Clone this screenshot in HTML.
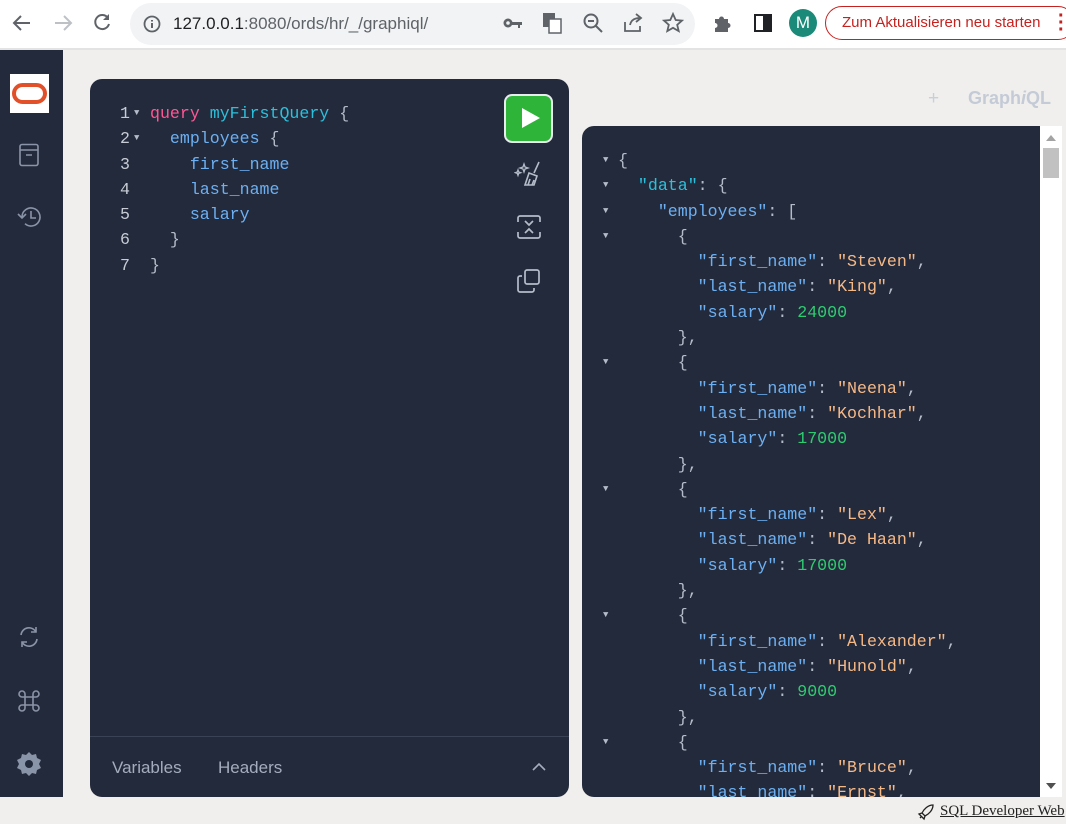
<!DOCTYPE html>
<html><head><meta charset="utf-8"><style>
*{margin:0;padding:0;box-sizing:border-box}
body{width:1066px;height:824px;overflow:hidden;background:#f0efed;font-family:"Liberation Sans",sans-serif;position:relative}
.tb{position:absolute;left:0;top:0;width:1066px;background:#fff;border-bottom:2px solid #e3e3e3;height:50px}
.url{position:absolute;left:130px;top:3px;width:565px;height:42px;border-radius:21px;background:#f1f3f4}
.url span{position:absolute;left:43px;top:11px;font-size:17px;color:#202124}
.ic{position:absolute}
.side{position:absolute;left:0;top:50px;width:63px;height:747px;background:#232a3b}
.logo{position:absolute;left:10px;top:74px;width:39px;height:39px;background:#fff}
.logo div{position:absolute;left:2px;top:9px;width:35px;height:21px;border:4px solid #e2502a;border-radius:11px}
.ed{position:absolute;left:90px;top:79px;width:479px;height:718px;background:#232a3b;border-radius:12px}
.res{position:absolute;left:582px;top:126px;width:458px;height:671px;background:#232a3b;border-radius:12px 0 0 12px}
.sb{position:absolute;left:1040px;top:126px;width:22px;height:671px;background:#fff}
.code{position:absolute;font-family:"Liberation Mono","DejaVu Sans Mono",monospace;font-size:16.6px;color:#b5bcc9}
.code div{height:25.3px;line-height:25.3px;white-space:pre;position:relative}
.k{color:#ff5794}.d{color:#2bc0dc}.f{color:#6cb0f3}.s{color:#f5b887}.n{color:#2ecc71}
.ln{position:absolute;left:-30px;color:#c7ccd6}
.ar{position:absolute;font-size:9px;color:#b5bcc9}
.rc div{padding-left:15px}
.rc .ar{left:0}
.run{position:absolute;left:504px;top:94px;width:49px;height:49px;border-radius:8px;background:#2fb43a;border:2px solid #e8ecef}
.run:after{content:"";position:absolute;left:16px;top:12px;border-left:18px solid #fff;border-top:10.5px solid transparent;border-bottom:10.5px solid transparent}
.bot{position:absolute;left:90px;top:736px;width:479px;border-top:1px solid #3a4256}
.tab{position:absolute;top:758px;font-size:17px;color:#a4adbd}
</style></head><body>
<div class="tb">
<svg class="ic" style="left:12px;top:13px" width="20" height="20" viewBox="0 0 20 20"><path d="M18 10H3M9 3L2 10l7 7" stroke="#5f6368" stroke-width="2" fill="none"/></svg>
<svg class="ic" style="left:53px;top:13px" width="20" height="20" viewBox="0 0 20 20"><path d="M2 10h15M11 3l7 7-7 7" stroke="#bdc1c6" stroke-width="2" fill="none"/></svg>
<svg class="ic" style="left:92px;top:12px" width="20" height="20" viewBox="0 0 20 20"><path d="M16 6A7 7 0 1 0 17 12" stroke="#5f6368" stroke-width="2" fill="none"/><path d="M17 2v6h-6z" fill="#5f6368"/></svg>
<div class="url"><svg class="ic" style="left:13px;top:12px" width="18" height="18" viewBox="0 0 18 18"><circle cx="9" cy="9" r="7.5" stroke="#5f6368" stroke-width="1.8" fill="none"/><path d="M9 8v5M9 5v1.5" stroke="#5f6368" stroke-width="2"/></svg><span>127.0.0.1<span style="position:static;color:#5f6368">:8080/ords/hr/_/graphiql/</span></span></div>
<svg class="ic" style="left:502px;top:14px" width="22" height="18" viewBox="0 0 22 18"><circle cx="6" cy="9" r="4.5" fill="#5f6368"/><path d="M9 8h11v3h-2v3h-2v-3h-7z" fill="#5f6368"/><circle cx="6" cy="9" r="1.8" fill="#f1f3f4"/></svg>
<svg class="ic" style="left:542px;top:12px" width="20" height="22" viewBox="0 0 20 22"><rect x="1" y="1" width="12" height="14" fill="#5f6368"/><rect x="7" y="7" width="12" height="14" fill="#fff" stroke="#5f6368" stroke-width="1.5"/></svg>
<svg class="ic" style="left:582px;top:12px" width="22" height="22" viewBox="0 0 22 22"><circle cx="9" cy="9" r="6.5" stroke="#5f6368" stroke-width="2" fill="none"/><path d="M6 9h6M14 14l6 6" stroke="#5f6368" stroke-width="2"/></svg>
<svg class="ic" style="left:622px;top:12px" width="22" height="22" viewBox="0 0 22 22"><path d="M3 10v9h15v-5M8 13c1-5 5-7 10-7M14 2l5 4-5 4" stroke="#5f6368" stroke-width="1.8" fill="none"/></svg>
<svg class="ic" style="left:662px;top:12px" width="22" height="22" viewBox="0 0 22 22"><path d="M11 2l2.7 6 6.3.6-4.8 4.2 1.5 6.3L11 15.8 5.3 19.1l1.5-6.3L2 8.6 8.3 8z" stroke="#5f6368" stroke-width="1.8" fill="none"/></svg>
<svg class="ic" style="left:712px;top:13px" width="20" height="20" viewBox="0 0 20 20"><path d="M3 6h4a2.5 2.5 0 0 1 5 0h4v4a2.5 2.5 0 0 1 0 5v4H3v-4a2.5 2.5 0 0 0 0-5z" fill="#5f6368"/></svg>
<svg class="ic" style="left:753px;top:13px" width="20" height="20" viewBox="0 0 20 20"><rect x="2" y="2" width="16" height="16" stroke="#202124" stroke-width="2" fill="none"/><rect x="10" y="2" width="8" height="16" fill="#202124"/></svg>
<div class="ic" style="left:789px;top:9px;width:28px;height:28px;border-radius:50%;background:#1b8a78;color:#fff;font-size:17px;text-align:center;line-height:28px">M</div>
<div class="ic" style="left:825px;top:6px;width:250px;height:34px;border-radius:17px;border:1.5px solid #c5221f;color:#c5221f;font-size:15px;line-height:31px;padding-left:16px">Zum Aktualisieren neu starten</div>
<div class="ic" style="left:1058px;top:13px;color:#c5221f;font-size:20px;line-height:7px;font-weight:bold">·<br>·<br>·</div>
</div>
<div class="side"></div>
<div class="logo"><div></div></div>
<svg class="ic" style="left:18px;top:143px" width="22" height="24" viewBox="0 0 22 24"><rect x="2" y="1.5" width="18" height="21" rx="2" stroke="#8a94a8" stroke-width="1.6" fill="none"/><path d="M2 7h18M8 12h6" stroke="#8a94a8" stroke-width="1.6"/></svg>
<svg class="ic" style="left:17px;top:205px" width="26" height="24" viewBox="0 0 26 24"><path d="M5 12a9 9 0 1 1 3 6.7" stroke="#8a94a8" stroke-width="1.6" fill="none"/><path d="M1 9l4 4 4-4M14 6v7h5" stroke="#8a94a8" stroke-width="1.6" fill="none"/></svg>
<svg class="ic" style="left:17px;top:625px" width="24" height="24" viewBox="0 0 24 24"><path d="M4 10a8 8 0 0 1 15-3M20 14a8 8 0 0 1-15 3" stroke="#8a94a8" stroke-width="1.6" fill="none"/><path d="M19 2v5h-5M5 22v-5h5" stroke="#8a94a8" stroke-width="1.6" fill="none"/></svg>
<svg class="ic" style="left:17px;top:689px" width="24" height="24" viewBox="0 0 24 24"><path d="M8 8h8v8H8zM8 8V5a3 3 0 1 0-3 3h3M16 8V5a3 3 0 1 1 3 3h-3M8 16v3a3 3 0 1 1-3-3h3M16 16v3a3 3 0 1 0 3-3h-3" stroke="#8a94a8" stroke-width="1.6" fill="none"/></svg>
<svg class="ic" style="left:16px;top:751px" width="26" height="26" viewBox="0 0 26 26"><path d="M13 1l3 3 4-1 1 4 4 2-2 4 2 4-4 2-1 4-4-1-3 3-3-3-4 1-1-4-4-2 2-4-2-4 4-2 1-4 4 1z" fill="#8a94a8"/><circle cx="13" cy="13" r="4" fill="#232a3b"/></svg>
<div class="ed"></div>
<div class="res"></div>
<div class="sb"><div style="position:absolute;left:3px;top:22px;width:16px;height:30px;background:#c1c1c1"></div><div style="position:absolute;left:6px;top:9px;border-bottom:6px solid #a3a3a3;border-left:5px solid transparent;border-right:5px solid transparent"></div><div style="position:absolute;left:6px;top:657px;border-top:6px solid #505050;border-left:5px solid transparent;border-right:5px solid transparent"></div></div>
<div class="ic" style="left:928px;top:88px;font-size:19px;color:#c9cfd9">+</div>
<div class="ic" style="left:968px;top:88px;font-size:18px;color:#c4cbd6;font-weight:bold">Graph<i>i</i>QL</div>
<div class="run"></div>
<svg class="ic" style="left:514px;top:160px" width="30" height="28" viewBox="0 0 30 28"><path d="M10 4l1 3 3 1-3 1-1 3-1-3-3-1 3-1zM4 10l.7 2 2 .7-2 .7-.7 2-.7-2-2-.7 2-.7z" stroke="#b5bcc9" stroke-width="1.3" fill="none"/><path d="M25 2l-5 11M15 13l8 3-3 9h-9zM14 25l2-6M18 25l2-5" stroke="#b5bcc9" stroke-width="1.6" fill="none"/></svg>
<svg class="ic" style="left:516px;top:214px" width="26" height="26" viewBox="0 0 26 26"><path d="M2 8V4a2 2 0 0 1 2-2h18a2 2 0 0 1 2 2v4M2 18v4a2 2 0 0 0 2 2h18a2 2 0 0 0 2-2v-4M9 7l4 4 4-4M9 19l4-4 4 4" stroke="#b5bcc9" stroke-width="1.7" fill="none"/></svg>
<svg class="ic" style="left:516px;top:268px" width="26" height="26" viewBox="0 0 26 26"><rect x="9" y="2" width="14" height="14" rx="2" stroke="#b5bcc9" stroke-width="1.7" fill="none"/><path d="M6 8H4a2 2 0 0 0-2 2v12a2 2 0 0 0 2 2h12a2 2 0 0 0 2-2v-2" stroke="#b5bcc9" stroke-width="1.7" fill="none"/></svg>
<div class="code" style="left:150px;top:101px"><div><span class="ln">1</span><span class="ar" style="left:-16px">▼</span><span class="k">query</span> <span class="d">myFirstQuery</span> {</div><div><span class="ln">2</span><span class="ar" style="left:-16px">▼</span>  <span class="f">employees</span> {</div><div><span class="ln">3</span>    <span class="f">first_name</span></div><div><span class="ln">4</span>    <span class="f">last_name</span></div><div><span class="ln">5</span>    <span class="f">salary</span></div><div><span class="ln">6</span>  }</div><div><span class="ln">7</span>}</div></div>
<div class="bot"></div>
<div class="tab" style="left:112px">Variables</div>
<div class="tab" style="left:218px">Headers</div>
<svg class="ic" style="left:531px;top:762px" width="16" height="10" viewBox="0 0 16 10"><path d="M2 8l6-6 6 6" stroke="#a4adbd" stroke-width="1.6" fill="none"/></svg>
<div class="code rc" style="left:603px;top:148px;height:649px;overflow:hidden;width:437px"><div><span class="ar">▼</span>{</div><div><span class="ar">▼</span>  <span class="d">"data"</span>: {</div><div><span class="ar">▼</span>    <span class="f">"employees"</span>: [</div><div><span class="ar">▼</span>      {</div><div>        <span class="f">"first_name"</span>: <span class="s">"Steven"</span>,</div><div>        <span class="f">"last_name"</span>: <span class="s">"King"</span>,</div><div>        <span class="f">"salary"</span>: <span class="n">24000</span></div><div>      },</div><div><span class="ar">▼</span>      {</div><div>        <span class="f">"first_name"</span>: <span class="s">"Neena"</span>,</div><div>        <span class="f">"last_name"</span>: <span class="s">"Kochhar"</span>,</div><div>        <span class="f">"salary"</span>: <span class="n">17000</span></div><div>      },</div><div><span class="ar">▼</span>      {</div><div>        <span class="f">"first_name"</span>: <span class="s">"Lex"</span>,</div><div>        <span class="f">"last_name"</span>: <span class="s">"De Haan"</span>,</div><div>        <span class="f">"salary"</span>: <span class="n">17000</span></div><div>      },</div><div><span class="ar">▼</span>      {</div><div>        <span class="f">"first_name"</span>: <span class="s">"Alexander"</span>,</div><div>        <span class="f">"last_name"</span>: <span class="s">"Hunold"</span>,</div><div>        <span class="f">"salary"</span>: <span class="n">9000</span></div><div>      },</div><div><span class="ar">▼</span>      {</div><div>        <span class="f">"first_name"</span>: <span class="s">"Bruce"</span>,</div><div>        <span class="f">"last_name"</span>: <span class="s">"Ernst"</span>,</div></div>
<svg class="ic" style="left:917px;top:803px" width="18" height="18" viewBox="0 0 18 18"><path d="M16 2c-5 0-9 4-11 8l3 3c4-2 8-6 8-11zM5 10l-3 1 2 2M8 13l-1 3-2-2M3 15l2-2" stroke="#222" stroke-width="1.3" fill="none"/></svg>
<div class="ic" style="left:940px;top:803px;font-family:'Liberation Serif',serif;font-size:15px;color:#222;text-decoration:underline">SQL Developer Web</div>
</body></html>
